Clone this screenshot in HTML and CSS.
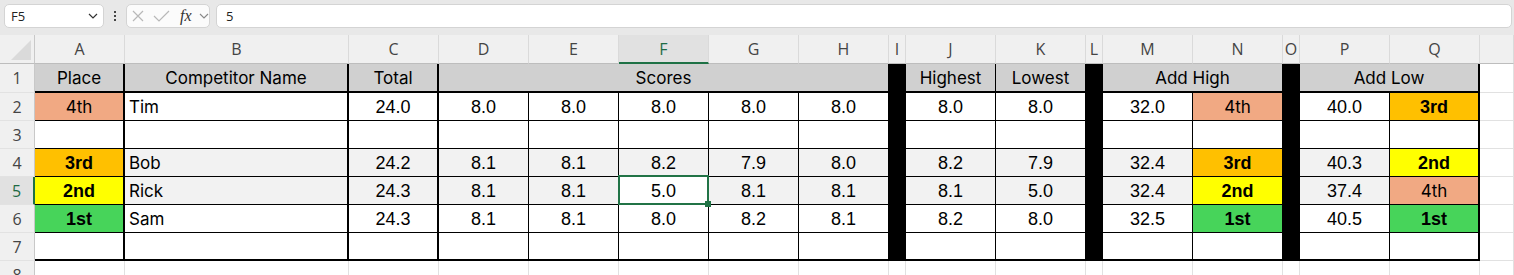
FILE: index.html
```html
<!DOCTYPE html>
<html lang="en">
<head>
  <meta charset="UTF-8" />
  <meta name="viewport" content="width=device-width, initial-scale=1.0" />
  <title>Competition Scores</title>
  <link rel="stylesheet" href="styles.css">
</head>
<body>
  <!-- Formula bar -->
  <div class="topbar">
    <div class="namebox">
      <span>F5</span>
      <svg class="chev" width="10" height="6" viewBox="0 0 10 6"><path d="M1 1 L5 5 L9 1" fill="none" stroke="#333" stroke-width="1.2"/></svg>
    </div>
    <div class="dots"><i></i><i></i><i></i></div>
    <div class="fxbox">
      <svg class="x" width="12" height="12" viewBox="0 0 12 12"><path d="M1 1 L11 11 M11 1 L1 11" stroke="#b8b8b8" stroke-width="1.2"/></svg>
      <svg class="check" width="17" height="12" viewBox="0 0 17 12"><path d="M1 6 L6 11 L16 1" fill="none" stroke="#b8b8b8" stroke-width="1.2"/></svg>
      <span class="fx">fx</span>
      <svg class="chev2" width="10" height="6" viewBox="0 0 10 6"><path d="M1 1 L5 5 L9 1" fill="none" stroke="#888" stroke-width="1.1"/></svg>
    </div>
    <div class="formula">5</div>
  </div>

  <!-- Grid -->
  <div class="sheet">
    <div class="corner"><svg width="35" height="29" viewBox="0 0 35 29"><polygon points="11,25 31,5 31,25" fill="#dadada"/></svg></div>
    <div class="ch">A</div><div class="ch">B</div><div class="ch">C</div><div class="ch">D</div><div class="ch">E</div>
    <div class="ch on">F</div><div class="ch">G</div><div class="ch">H</div><div class="ch">I</div><div class="ch">J</div>
    <div class="ch">K</div><div class="ch">L</div><div class="ch">M</div><div class="ch">N</div><div class="ch">O</div>
    <div class="ch">P</div><div class="ch">Q</div><div class="ch"></div>

    <!-- row 1 -->
    <div class="rh">1</div>
    <div class="g t tr tb hd">Place</div>
    <div class="g t tr tb hd">Competitor Name</div>
    <div class="g t tr tb hd">Total</div>
    <div class="g t tb hd span5">Scores</div>
    <div class="g t tb blk"></div>
    <div class="g t tb hd">Highest</div>
    <div class="g t tb hd">Lowest</div>
    <div class="g t tb blk"></div>
    <div class="g t tb hd span2">Add High</div>
    <div class="g t tb blk"></div>
    <div class="g t tr tb hd span2">Add Low</div>
    <div class="g"></div>

    <!-- row 2 -->
    <div class="rh">2</div>
    <div class="g t tr r4">4th</div>
    <div class="g t tr name">Tim</div>
    <div class="g t tr">24.0</div>
    <div class="g t">8.0</div><div class="g t">8.0</div><div class="g t">8.0</div><div class="g t">8.0</div><div class="g t">8.0</div>
    <div class="g t blk"></div>
    <div class="g t">8.0</div><div class="g t">8.0</div>
    <div class="g t blk"></div>
    <div class="g t">32.0</div><div class="g t r4">4th</div>
    <div class="g t blk"></div>
    <div class="g t">40.0</div><div class="g t tr r3">3rd</div>
    <div class="g"></div>

    <!-- row 3 -->
    <div class="rh">3</div>
    <div class="g t tr"></div><div class="g t tr"></div><div class="g t tr"></div>
    <div class="g t"></div><div class="g t"></div><div class="g t"></div><div class="g t"></div><div class="g t"></div>
    <div class="g t blk"></div>
    <div class="g t"></div><div class="g t"></div>
    <div class="g t blk"></div>
    <div class="g t"></div><div class="g t"></div>
    <div class="g t blk"></div>
    <div class="g t"></div><div class="g t tr"></div>
    <div class="g"></div>

    <!-- row 4 -->
    <div class="rh">4</div>
    <div class="g t tr r3">3rd</div>
    <div class="g t tr name alt">Bob</div>
    <div class="g t tr alt">24.2</div>
    <div class="g t alt">8.1</div><div class="g t alt">8.1</div><div class="g t alt">8.2</div><div class="g t alt">7.9</div><div class="g t alt">8.0</div>
    <div class="g t blk"></div>
    <div class="g t alt">8.2</div><div class="g t alt">7.9</div>
    <div class="g t blk"></div>
    <div class="g t alt">32.4</div><div class="g t r3">3rd</div>
    <div class="g t blk"></div>
    <div class="g t alt">40.3</div><div class="g t tr r2">2nd</div>
    <div class="g"></div>

    <!-- row 5 -->
    <div class="rh on">5</div>
    <div class="g t tr r2">2nd</div>
    <div class="g t tr name alt">Rick</div>
    <div class="g t tr alt">24.3</div>
    <div class="g t alt">8.1</div><div class="g t alt">8.1</div><div class="g t sel">5.0</div><div class="g t alt">8.1</div><div class="g t alt">8.1</div>
    <div class="g t blk"></div>
    <div class="g t alt">8.1</div><div class="g t alt">5.0</div>
    <div class="g t blk"></div>
    <div class="g t alt">32.4</div><div class="g t r2">2nd</div>
    <div class="g t blk"></div>
    <div class="g t alt">37.4</div><div class="g t tr r4">4th</div>
    <div class="g"></div>

    <!-- row 6 -->
    <div class="rh">6</div>
    <div class="g t tr r1">1st</div>
    <div class="g t tr name">Sam</div>
    <div class="g t tr">24.3</div>
    <div class="g t">8.1</div><div class="g t">8.1</div><div class="g t">8.0</div><div class="g t">8.2</div><div class="g t">8.1</div>
    <div class="g t blk"></div>
    <div class="g t">8.2</div><div class="g t">8.0</div>
    <div class="g t blk"></div>
    <div class="g t">32.5</div><div class="g t r1">1st</div>
    <div class="g t blk"></div>
    <div class="g t">40.5</div><div class="g t tr r1">1st</div>
    <div class="g"></div>

    <!-- row 7 -->
    <div class="rh">7</div>
    <div class="g t tr tb"></div><div class="g t tr tb"></div><div class="g t tr tb"></div>
    <div class="g t tb"></div><div class="g t tb"></div><div class="g t tb"></div><div class="g t tb"></div><div class="g t tb"></div>
    <div class="g t tb blk"></div>
    <div class="g t tb"></div><div class="g t tb"></div>
    <div class="g t tb blk"></div>
    <div class="g t tb"></div><div class="g t tb"></div>
    <div class="g t tb blk"></div>
    <div class="g t tb"></div><div class="g t tr tb"></div>
    <div class="g"></div>

    <!-- row 8 -->
    <div class="rh">8</div>
    <div class="g"></div><div class="g"></div><div class="g"></div><div class="g"></div><div class="g"></div><div class="g"></div>
    <div class="g"></div><div class="g"></div><div class="g"></div><div class="g"></div><div class="g"></div><div class="g"></div>
    <div class="g"></div><div class="g"></div><div class="g"></div><div class="g"></div><div class="g"></div><div class="g"></div>
  </div>
</body>
</html>
```

FILE: styles.css
```css
body {
  margin: 0;
  background: #fff;
  overflow: hidden;
  font-family: "Inter", sans-serif;
}

/* formula bar */
.topbar {
  height: 35px;
  box-sizing: border-box;
  padding-top: 4px;
  background: #e8e8e8;
  display: flex;
  align-items: flex-start;
}

.namebox {
  margin-left: 4px;
  width: 100px;
  height: 24px;
  box-sizing: border-box;
  padding: 0 5px 0 6px;
  background: #fff;
  border: 1px solid #d4d4d4;
  border-radius: 5px;
  display: flex;
  align-items: center;
  justify-content: space-between;
  font-family: "Open Sans", sans-serif;
  font-size: 13px;
  color: #222;
}

.dots {
  width: 22px;
  height: 24px;
  display: flex;
  flex-direction: column;
  align-items: center;
  justify-content: center;
  gap: 2px;
}

.dots i {
  width: 2px;
  height: 2px;
  background: #444;
}

.fxbox {
  width: 84px;
  height: 24px;
  box-sizing: border-box;
  padding-left: 5px;
  background: #fbfbfb;
  border: 1px solid #d4d4d4;
  border-radius: 5px;
  display: flex;
  align-items: center;
}

.fxbox .x { margin-right: 9px; }
.fxbox .check { margin-right: 10px; }

.fx {
  width: 15px;
  margin-right: 4px;
  font-family: "Liberation Serif", serif;
  font-style: italic;
  font-size: 16px;
  color: #333;
  line-height: 1;
}

.formula {
  flex: 1;
  margin-left: 6px;
  margin-right: 2px;
  height: 24px;
  box-sizing: border-box;
  padding-left: 9px;
  background: #fff;
  border: 1px solid #d4d4d4;
  border-radius: 5px;
  display: flex;
  align-items: center;
  font-family: "Open Sans", sans-serif;
  font-size: 13px;
  color: #222;
}

/* sheet */
.sheet {
  display: grid;
  grid-template-columns: 35px 90px 224px 90px 90px 90px 90px 90px 90px 17px 90px 90px 17px 90px 90px 17px 90px 90px 1fr;
  grid-template-rows: 29px 29px repeat(6, 28px) 28px;
}

.corner {
  position: relative;
  background: #f0f0f0;
  border-right: 1px solid #c8c8c8;
  border-bottom: 1px solid #bdbdbd;
  box-sizing: border-box;
  overflow: hidden;
}

.corner svg {
  display: block;
}

.corner::after {
  content: "";
  position: absolute;
  right: -1px;
  top: 0;
  width: 1px;
  height: 3px;
  background: #000;
}

.ch,
.rh {
  box-sizing: border-box;
  background: #f0f0f0;
  display: flex;
  align-items: center;
  justify-content: center;
  font-family: "Open Sans", sans-serif;
  font-size: 16px;
  color: #444;
}

.ch {
  border-right: 1px solid #dadada;
  border-bottom: 1px solid #bdbdbd;
}

.ch.on {
  background: #e1e1e1;
  border-bottom: 2px solid #1e7145;
  color: #1e6b45;
}

.rh {
  border-right: 1px solid #c8c8c8;
  border-bottom: 1px solid #e2e2e2;
}

.rh.on {
  background: #e1e1e1;
  border-right: 2px solid #1e7145;
  color: #1e6b45;
}

.g {
  box-sizing: border-box;
  border-right: 1px solid #e1e1e1;
  border-bottom: 1px solid #e1e1e1;
  display: flex;
  align-items: center;
  justify-content: center;
  padding-top: 1px;
  font-family: "Liberation Sans", Arial, sans-serif;
  font-size: 18px;
  color: #000;
  white-space: nowrap;
}

.t { border-color: #000; }
.tr { border-right-width: 2px; }
.tb { border-bottom-width: 2px; }

.hd {
  background: #d0d0d0;
  font-family: "Inter", sans-serif;
  font-size: 17px;
}

.span5 { grid-column: span 5; }
.span2 { grid-column: span 2; }

.name {
  justify-content: flex-start;
  padding-left: 4px;
  font-family: "Inter", sans-serif;
  font-size: 17px;
}

.blk { background: #000; }
.alt { background: #f2f2f2; }

.r1 { background: #47d45a; font-weight: bold; }
.r2 { background: #ffff00; font-weight: bold; }
.r3 { background: #ffc000; font-weight: bold; }
.r4 {
  background: #f1a983;
  font-family: "Inter", sans-serif;
  font-size: 17px;
}

/* selected cell */
.sel {
  position: relative;
  background: #fff;
}

.sel::after {
  content: "";
  position: absolute;
  top: -2px;
  left: -1px;
  right: -1px;
  bottom: -1px;
  border: 2px solid #217346;
}

.sel::before {
  content: "";
  position: absolute;
  right: -3px;
  bottom: -3px;
  width: 6px;
  height: 6px;
  background: #217346;
  z-index: 1;
}
```
